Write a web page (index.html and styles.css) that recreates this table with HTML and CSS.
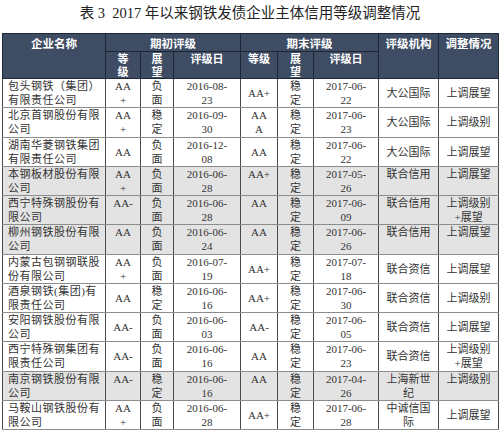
FILE: index.html
```html
<!DOCTYPE html>
<html lang="zh-CN">
<head>
<meta charset="utf-8">
<title>表3</title>
<link rel="stylesheet" href="styles.css">
</head>
<body>
<div class="title">表 3&nbsp; 2017 年以来钢铁发债企业主体信用等级调整情况</div>
<table class="grid">
  <colgroup>
    <col class="c-name"><col class="c-g1"><col class="c-o1"><col class="c-d1">
    <col class="c-g2"><col class="c-o2"><col class="c-d2"><col class="c-org"><col class="c-adj">
  </colgroup>
  <thead>
    <tr class="h1">
      <th rowspan="2">企业名称</th>
      <th colspan="3" class="mid">期初评级</th>
      <th colspan="3" class="mid">期末评级</th>
      <th rowspan="2">评级机构</th>
      <th rowspan="2">调整情况</th>
    </tr>
    <tr class="h2">
      <th>等<br>级</th><th>展<br>望</th><th>评级日</th>
      <th>等级</th><th>展<br>望</th><th>评级日</th>
    </tr>
  </thead>
  <tbody>
    <tr><td class="name">包头钢铁（集团）<br>有限责任公司</td><td>AA<br>+</td><td>负<br>面</td><td>2016-08-<br>23</td><td>AA+</td><td>稳<br>定</td><td>2017-06-<br>22</td><td>大公国际</td><td>上调展望</td></tr>
    <tr><td class="name">北京首钢股份有限<br>公司</td><td>AA<br>+</td><td>稳<br>定</td><td>2016-09-<br>30</td><td>AA<br>A</td><td>稳<br>定</td><td>2017-06-<br>23</td><td>大公国际</td><td>上调级别</td></tr>
    <tr><td class="name">湖南华菱钢铁集团<br>有限责任公司</td><td>AA</td><td>负<br>面</td><td>2016-12-<br>08</td><td>AA</td><td>稳<br>定</td><td>2017-06-<br>22</td><td>大公国际</td><td>上调展望</td></tr>
    <tr class="shade"><td class="name">本钢板材股份有限<br>公司</td><td>AA<br>+</td><td>负<br>面</td><td>2016-06-<br>28</td><td>AA+</td><td>稳<br>定</td><td>2017-05-<br>26</td><td>联合信用</td><td>上调展望</td></tr>
    <tr class="shade"><td class="name">西宁特殊钢股份有<br>限公司</td><td>AA-</td><td>负<br>面</td><td>2016-06-<br>28</td><td>AA</td><td>稳<br>定</td><td>2017-06-<br>09</td><td>联合信用</td><td>上调级别<br>+展望</td></tr>
    <tr class="shade"><td class="name">柳州钢铁股份有限<br>公司</td><td>AA</td><td>负<br>面</td><td>2016-06-<br>24</td><td>AA</td><td>稳<br>定</td><td>2017-06-<br>26</td><td>联合信用</td><td>上调展望</td></tr>
    <tr><td class="name">内蒙古包钢钢联股<br>份有限公司</td><td>AA<br>+</td><td>负<br>面</td><td>2016-07-<br>19</td><td>AA+</td><td>稳<br>定</td><td>2017-07-<br>18</td><td>联合资信</td><td>上调展望</td></tr>
    <tr><td class="name">酒泉钢铁(集团)有<br>限责任公司</td><td>AA</td><td>稳<br>定</td><td>2016-06-<br>16</td><td>AA+</td><td>稳<br>定</td><td>2017-06-<br>30</td><td>联合资信</td><td>上调级别</td></tr>
    <tr><td class="name">安阳钢铁股份有限<br>公司</td><td>AA-</td><td>负<br>面</td><td>2016-06-<br>03</td><td>AA-</td><td>稳<br>定</td><td>2017-06-<br>05</td><td>联合资信</td><td>上调展望</td></tr>
    <tr><td class="name">西宁特殊钢集团有<br>限责任公司</td><td>AA-</td><td>负<br>面</td><td>2016-06-<br>16</td><td>AA</td><td>稳<br>定</td><td>2017-06-<br>23</td><td>联合资信</td><td>上调级别<br>+展望</td></tr>
    <tr class="shade"><td class="name">南京钢铁股份有限<br>公司</td><td>AA-</td><td>稳<br>定</td><td>2016-06-<br>16</td><td>AA</td><td>稳<br>定</td><td>2017-04-<br>26</td><td>上海新世<br>纪</td><td>上调级别</td></tr>
    <tr><td class="name">马鞍山钢铁股份有<br>限公司</td><td>AA<br>+</td><td>负<br>面</td><td>2016-06-<br>28</td><td>AA+</td><td>稳<br>定</td><td>2017-06-<br>28</td><td>中诚信国<br>际</td><td>上调展望</td></tr>
  </tbody>
</table>
</body>
</html>
```
FILE: styles.css
```css
html, body {
  margin: 0;
  padding: 0;
  background: #ffffff;
}

body {
  font-family: "Liberation Serif", "Noto Sans CJK SC", serif;
  color: #333333;
}

.title {
  height: 33px;
  line-height: 26px;
  text-align: center;
  font-size: 14.5px;
  color: #222222;
  font-family: "Liberation Serif", "Noto Sans CJK SC", serif;
}

.grid {
  margin-left: 2px;
  width: 496px;
  border-collapse: collapse;
  table-layout: fixed;
}

.c-name { width: 103px; }
.c-g1 { width: 35px; }
.c-o1 { width: 33px; }
.c-d1 { width: 67px; }
.c-g2 { width: 37px; }
.c-o2 { width: 36px; }
.c-d2 { width: 65px; }
.c-org { width: 60px; }
.c-adj { width: 60px; }

.grid th {
  background: #3e4c64;
  color: #ffffff;
  font-family: "Noto Sans CJK SC", sans-serif;
  font-weight: bold;
  font-size: 11.5px;
  border: 1px solid #1e2736;
  vertical-align: top;
  text-align: center;
  padding: 0;
}

.h1 th {
  height: 17px;
  line-height: 16px;
  padding-top: 1px;
}

.h1 th.mid {
  vertical-align: middle;
  padding-top: 0;
}

.h2 th {
  height: 26px;
  line-height: 13px;
  font-size: 11px;
  padding-top: 0;
}

.grid td {
  height: 28.25px;
  padding: 0 2px;
  font-size: 11px;
  line-height: 14px;
  text-align: center;
  vertical-align: middle;
  border-left: 1px solid #4a4a4a;
  border-right: 1px solid #4a4a4a;
  border-bottom: 1px solid #8c8c8c;
  background: #ffffff;
  color: #333333;
}

.grid td.name {
  text-align: left;
  padding-left: 5px;
  letter-spacing: 0.5px;
}

.grid tr.shade td {
  background: #e3e3e3;
  vertical-align: top;
}
```
